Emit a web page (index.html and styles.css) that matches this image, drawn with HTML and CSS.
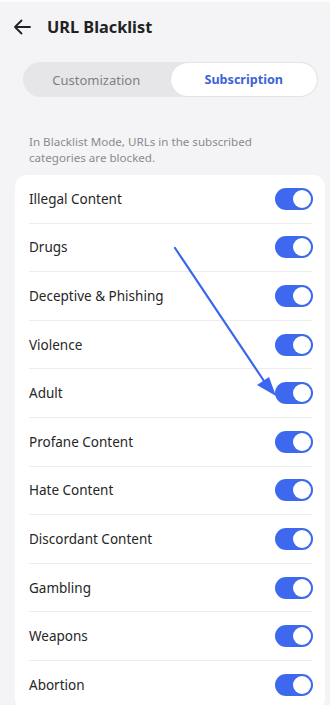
FILE: index.html
```html
<!DOCTYPE html>
<html>
<head>
<meta charset="utf-8">
<link rel="stylesheet" href="styles.css">
</head>
<body>
<div class="page">
  <div class="topline"></div>
  <header class="header">
    <svg class="back" width="20" height="20" viewBox="0 0 20 20"><path d="M18 10H3M9.5 3.5L3 10l6.5 6.5" fill="none" stroke="#222" stroke-width="1.8" stroke-linecap="round" stroke-linejoin="round"/></svg>
    <h1 class="title">URL Blacklist</h1>
  </header>
  <div class="tabs">
    <div class="tab">Customization</div>
    <div class="tab active">Subscription</div>
  </div>
  <p class="desc">In Blacklist Mode, URLs in the subscribed categories are blocked.</p>
  <div class="card">
    <div class="row"><span>Illegal Content</span><i class="sw"></i></div>
    <div class="row"><span>Drugs</span><i class="sw"></i></div>
    <div class="row"><span>Deceptive &amp; Phishing</span><i class="sw"></i></div>
    <div class="row"><span>Violence</span><i class="sw"></i></div>
    <div class="row"><span>Adult</span><i class="sw"></i></div>
    <div class="row"><span>Profane Content</span><i class="sw"></i></div>
    <div class="row"><span>Hate Content</span><i class="sw"></i></div>
    <div class="row"><span>Discordant Content</span><i class="sw"></i></div>
    <div class="row"><span>Gambling</span><i class="sw"></i></div>
    <div class="row"><span>Weapons</span><i class="sw"></i></div>
    <div class="row"><span>Abortion</span><i class="sw"></i></div>
  </div>
  <svg class="arrow" width="330" height="705" viewBox="0 0 330 705">
    <line x1="175" y1="248" x2="266" y2="384" stroke="#3c66ef" stroke-width="2.2" stroke-linecap="round"/>
    <polygon points="276,396 257,385 269,377" fill="#3c66ef"/>
  </svg>
</div>
</body>
</html>
```
FILE: styles.css
```css
html, body {
  margin: 0;
  padding: 0;
}
body {
  background: #f4f4f6;
  font-family: "Noto Sans", Roboto, sans-serif;
  width: 330px;
  height: 705px;
  overflow: hidden;
}
.page {
  position: relative;
  height: 705px;
}
.topline {
  height: 2px;
  background: #fbfbfc;
}
.header {
  display: flex;
  align-items: center;
  height: 50px;
  padding-left: 12px;
}
.back {
  display: block;
}
.title {
  margin: 0 0 0 15px;
  font-size: 16.3px;
  font-weight: 700;
  color: #222;
}
.tabs {
  display: flex;
  margin: 10px 12px 0 23px;
  height: 35px;
  background: #e6e6e8;
  border-radius: 18px;
}
.tab {
  flex: 1;
  display: flex;
  align-items: center;
  justify-content: center;
  font-size: 13px;
  color: #808084;
  border-radius: 18px;
}
.tab.active {
  background: #fff;
  color: #3d63d8;
  font-weight: 700;
  font-size: 12.6px;
  margin: 1px;
  box-shadow: 0 0 1px rgba(0,0,0,0.1);
}
.desc {
  margin: 37px 20px 0 29px;
  font-size: 11.6px;
  line-height: 16px;
  color: #8a8a8e;
}
.card {
  margin: 9px 5px 0 15px;
  background: #fff;
  border-radius: 12px;
  padding: 0 13px 0 14px;
}
.row {
  display: flex;
  align-items: center;
  justify-content: space-between;
  height: 48.6px;
  border-bottom: 1px solid #ececee;
  box-sizing: border-box;
  font-size: 13.5px;
  color: #262626;
}
.sw {
  position: relative;
  width: 38px;
  height: 22px;
  border-radius: 11px;
  background: #3e68ee;
  margin-right: -1px;
}
.sw::after {
  content: "";
  position: absolute;
  right: 2px;
  top: 2px;
  width: 18px;
  height: 18px;
  border-radius: 50%;
  background: #fff;
}
.arrow {
  position: absolute;
  left: 0;
  top: 0;
  pointer-events: none;
}
```
